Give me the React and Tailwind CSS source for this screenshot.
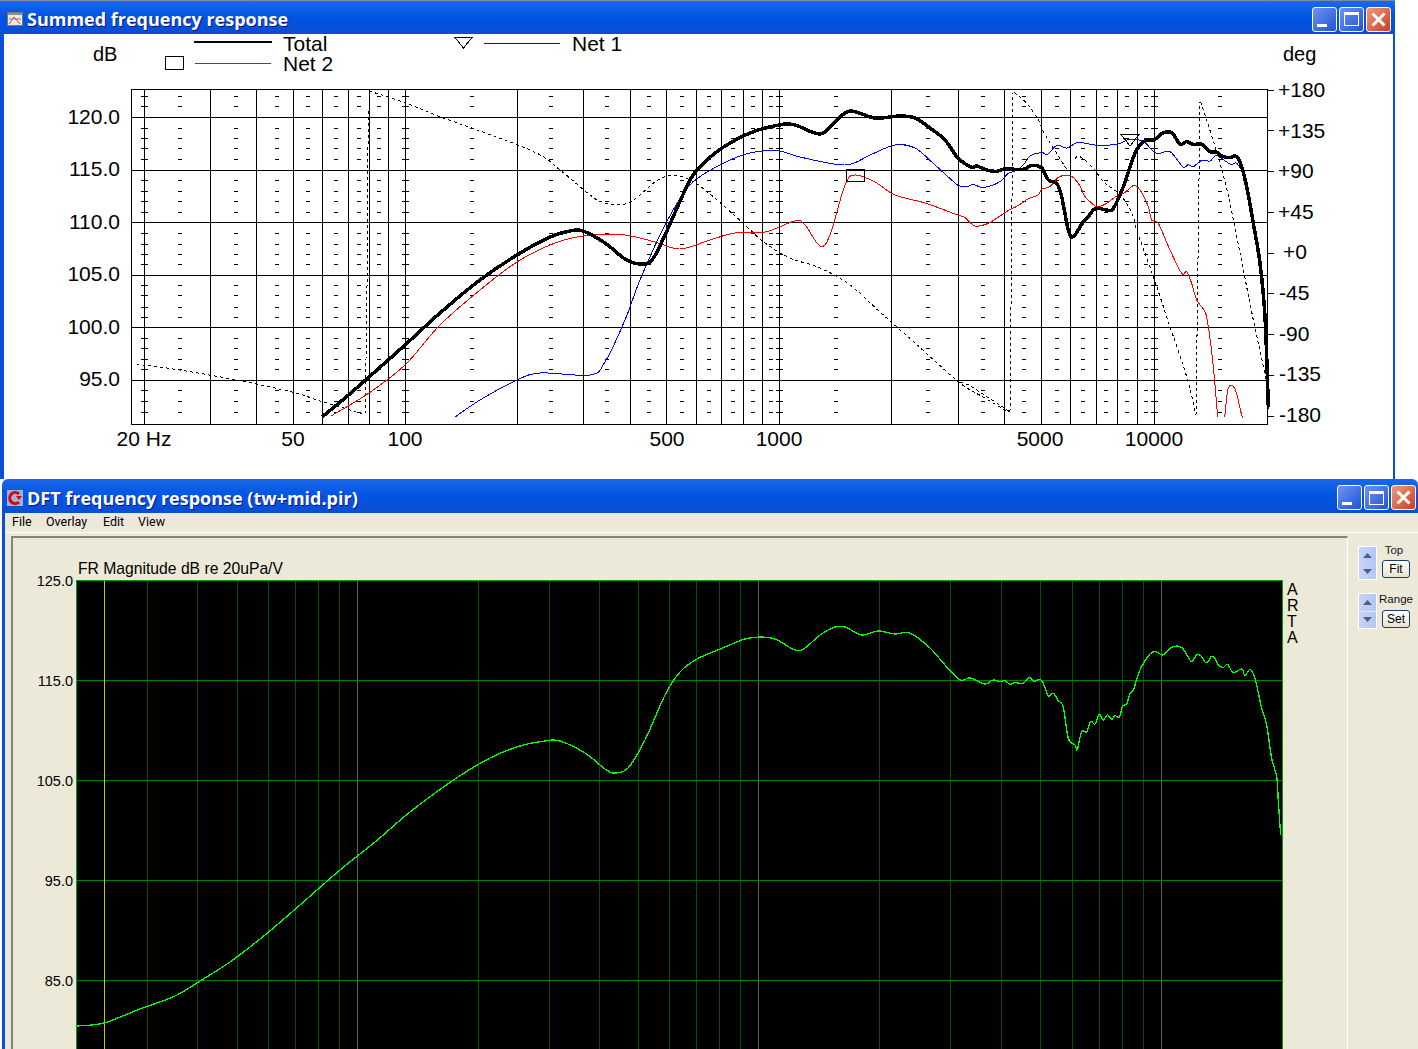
import React from "react";

const fromZoom = (pts, ox, oy) => pts.map(([x, y]) => [ox + x / 3, oy + y / 3]);

// catmull-rom through the read-off points, so the curves don't look polygonal
const smooth = (pts) => {
  let d = "M" + pts[0][0] + " " + pts[0][1];
  for (let i = 0; i < pts.length - 1; i++) {
    const p0 = pts[i - 1] || pts[i];
    const p1 = pts[i];
    const p2 = pts[i + 1];
    const p3 = pts[i + 2] || p2;
    const c1x = p1[0] + (p2[0] - p0[0]) / 6;
    const c1y = p1[1] + (p2[1] - p0[1]) / 6;
    const c2x = p2[0] - (p3[0] - p1[0]) / 6;
    const c2y = p2[1] - (p3[1] - p1[1]) / 6;
    d += " C" + c1x + " " + c1y + " " + c2x + " " + c2y + " " + p2[0] + " " + p2[1];
  }
  return d;
};

const topGridX = [144, 210, 256, 293, 322, 348, 369, 388, 405, 517, 583, 630, 666, 696, 721, 743, 762, 779, 891, 958, 1004, 1041, 1070, 1096, 1117, 1137, 1154];
const topGridY = [117, 170, 222, 275, 327, 380];
const topTickX = [180, 236, 277, 308, 336, 359, 379, 472, 551, 607, 649, 682, 709, 733, 753, 771, 836, 928, 983, 1024, 1057, 1083, 1106, 1127, 1146, 1220];
const topCrossX = [144, 405, 779, 1154];
const topTickY = [96, 106, 128, 138, 148, 159, 180, 191, 201, 212, 233, 244, 254, 264, 285, 295, 307, 317, 338, 348, 359, 369, 390, 401, 412];
const bottomGridX = [147, 197, 237, 268, 295, 318, 339, 478, 549, 599, 638, 669, 696, 719, 740, 879, 950, 1001, 1040, 1072, 1099, 1122, 1143];
const bottomBrightX = [357, 758, 1161];
const bottomGridY = [680, 780, 880, 980];

const total = [
  [322, 417], [345, 398], [369, 377], [405, 345], [440, 313], [480, 280], [517, 255], [550, 237], [570, 231], [583, 231],
  [605, 243], [625, 259], [640, 264], [652, 260], [665, 235], [690, 180], [705, 162], [722, 148], [750, 133], [779, 125], [795, 125],
  [820, 134], [835, 122], [850, 111], [875, 118], [900, 116], [915, 118], [930, 128], [945, 140], [958, 158],
  ...fromZoom([
    [35, 232], [50, 228], [80, 240], [110, 244], [135, 237], [190, 238], [215, 226], [245, 234], [265, 270], [290, 280],
    [305, 320], [325, 420], [340, 440], [370, 395], [385, 380], [400, 360], [415, 355], [440, 360], [460, 355], [490, 290],
    [525, 190], [550, 155], [585, 148], [605, 130], [635, 128], [660, 163], [680, 155], [700, 163], [725, 163], [750, 185],
    [770, 187], [785, 198], [810, 203], [825, 198], [840, 215], [860, 290], [880, 400], [900, 520], [915, 680], [925, 950],
  ], 960, 90),
];
const blue = [
  [455, 417], [480, 400], [515, 381], [540, 373], [590, 375], [605, 362], [625, 320], [640, 280], [665, 225], [690, 185],
  [720, 165], [750, 153], [779, 151], [800, 157], [845, 165], [870, 155], [895, 145], [915, 148], [935, 165], [955, 183],
  ...fromZoom([
    [0, 288], [20, 290], [40, 284], [65, 292], [90, 288], [120, 275], [145, 250], [165, 243], [190, 225], [210, 198],
    [245, 188], [262, 193], [285, 170], [300, 167], [322, 174], [355, 157], [405, 165], [470, 163], [510, 148], [550, 155],
    [590, 190], [630, 185], [668, 230], [685, 224], [700, 230], [725, 211], [750, 213], [770, 197], [810, 222], [830, 220], [850, 250],
  ], 960, 90),
];
const red = [
  [331, 416], [369, 393], [405, 365], [440, 325], [480, 290], [517, 262], [555, 243], [590, 235], [625, 235], [655, 242],
  [680, 249], [710, 240], [735, 233], [765, 232], [795, 221], [805, 225], [820, 246], [830, 235], [845, 185], [855, 175],
  [875, 182], [895, 195], [925, 203], [955, 214],
  ...fromZoom([
    [15, 383], [45, 408], [85, 400], [120, 378], [150, 358], [165, 352], [185, 340], [205, 326], [235, 315], [245, 298],
    [270, 290], [295, 262], [330, 257], [355, 280], [375, 320], [390, 335], [410, 350], [435, 343], [470, 318], [495, 307],
    [520, 287], [540, 300], [565, 350], [575, 390], [595, 400], [630, 480], [665, 550], [680, 545], [695, 580], [710, 630],
    [735, 665], [745, 710], [760, 830], [773, 982],
  ], 960, 90),
];
const redTail = fromZoom([[794, 982], [805, 895], [825, 897], [845, 975], [851, 982]], 960, 90);
const phaseA = fromZoom([[50, 838], [160, 852], [350, 885], [520, 922], [600, 948], [735, 988]], 120, 85);
const phaseB = [
  ...fromZoom([[748, 18], [860, 55], [960, 95]], 120, 85),
  [530, 150], [560, 170], [590, 195], [605, 203], [625, 204], [640, 195], [655, 182], [672, 175], [690, 180], [705, 190],
  [725, 207], [745, 225], [765, 243], [790, 258], [820, 268], [850, 285], [880, 312], [915, 343], [960, 383], [985, 398], [1008, 412],
];
const phaseC = fromZoom([[163, 8], [200, 40], [235, 90], [250, 125], [290, 190], [320, 238]], 960, 90);
const phaseD = fromZoom([
  [345, 205], [360, 200], [400, 235], [430, 275], [470, 305], [500, 340], [520, 380], [530, 420], [580, 560], [630, 710], [680, 860], [708, 975],
], 960, 90);
const phaseE = fromZoom([[722, 35], [740, 90], [780, 220], [810, 340], [850, 540], [880, 690], [920, 880], [925, 960]], 960, 90);
const phaseF = fromZoom([[0, 877], [30, 887], [80, 920], [135, 955], [150, 968]], 960, 90);
const dft = [
  [77, 1026], [104, 1023], [140, 1009], [175, 996], [200, 981], [230, 962], [265, 935], [300, 905], [340, 870], [375, 842],
  [410, 812], [455, 779], [490, 758], [520, 746], [545, 741], [560, 741], [585, 753], [605, 769], [615, 773], [628, 768],
  [645, 740], [665, 695], [680, 672], [697, 659], [725, 647], [745, 639], [760, 637], [775, 639], [795, 650], [805, 648],
  [820, 635], [835, 627], [845, 627], [862, 635], [878, 631], [895, 634], [910, 633], [930, 648], [945, 665], [960, 680],
  [970, 678], [985, 684], [993, 680],
  ...fromZoom([
    [0, 155], [15, 152], [30, 163], [45, 158], [70, 160], [87, 143], [102, 154], [120, 148], [130, 160], [145, 198],
    [160, 190], [175, 212], [190, 232], [205, 325], [225, 345], [232, 358], [245, 305], [260, 306], [272, 275], [285, 282],
    [298, 253], [310, 270], [322, 254], [335, 268], [345, 257], [358, 262], [368, 228], [380, 222], [390, 190], [400, 180],
    [420, 120], [450, 72], [468, 65], [488, 75], [510, 55], [530, 48], [548, 55], [570, 90], [578, 92], [592, 73],
    [605, 80], [615, 96], [625, 95], [633, 80], [645, 85], [655, 105], [670, 112], [683, 103], [700, 128], [725, 117],
    [735, 137], [750, 118], [765, 145], [785, 235], [800, 285], [815, 385], [830, 440], [835, 515], [842, 615],
  ], 1000, 630),
];

const WinButtons = () => (
  <div className="flex gap-[2px]">
    <div className="relative w-[25px] h-[25px] rounded-[3px] border border-white bg-gradient-to-br from-[#6f94ee] to-[#1f51d8]">
      <div className="absolute left-[4px] bottom-[4px] w-[10px] h-[3px] bg-white" />
    </div>
    <div className="flex items-center justify-center w-[25px] h-[25px] rounded-[3px] border border-white bg-gradient-to-br from-[#6f94ee] to-[#1f51d8]">
      <div className="w-[15px] h-[14px] border border-white border-t-[3px]" />
    </div>
    <div className="flex items-center justify-center w-[25px] h-[25px] rounded-[3px] border border-white bg-gradient-to-br from-[#ef9a7c] to-[#c9381a]">
      <svg width="17" height="17" viewBox="0 0 17 17">
        <path d="M2.5 2.5 L14.5 14.5 M14.5 2.5 L2.5 14.5" stroke="#fff" strokeWidth="3" />
      </svg>
    </div>
  </div>
);

const TitleBar = ({ title, icon, extra }) => (
  <div className={"flex items-center shrink-0 h-[34px] pt-[3px] bg-gradient-to-b from-[#1a68ea] via-[#0054e3] to-[#0a4fd0] " + extra}>
    {icon}
    <div className="ml-[4px] flex-1 text-white text-[18px] leading-none font-bold font-['Open_Sans',sans-serif] [text-shadow:1px_1px_#0f1089]">
      {title}
    </div>
    <WinButtons />
  </div>
);

const SummedChart = () => (
  <svg width="1389" height="445" viewBox="4 34 1389 445" className="block overflow-visible" fontFamily="'Liberation Sans', sans-serif" fontSize="21" fill="#000">
    <g shapeRendering="crispEdges" stroke="#000">
      <rect x="131.5" y="89.5" width="1136" height="335" fill="none" />
      {topGridX.map((x) => <line key={x} x1={x + 0.5} x2={x + 0.5} y1="89" y2="424" />)}
      {topGridY.map((y) => <line key={y} x1="131" x2="1268" y1={y + 0.5} y2={y + 0.5} />)}
      {topTickX.map((x) => topTickY.map((y) => <line key={x + "-" + y} x1={x - 2} x2={x + 2} y1={y + 0.5} y2={y + 0.5} />))}
      {topCrossX.map((x) => topTickY.map((y) => <line key={x + "-" + y} x1={x - 3} x2={x + 4} y1={y + 0.5} y2={y + 0.5} />))}
      {[90, 130, 171, 212, 253, 293, 334, 375, 416].map((y) => <line key={y} x1="1268" x2="1274" y1={y + 0.5} y2={y + 0.5} />)}
    </g>
    <g fill="none" stroke="#000" strokeDasharray="3 3" shapeRendering="crispEdges">
      <path d={smooth(phaseA)} />
      <path d="M365 414 L366 360 L367.500 250 L368 145 L369.500 91" />
      <path d={smooth(phaseB)} />
      <path d={smooth(phaseF)} />
      <path d="M1010 412 L1013 93" />
      <path d={smooth(phaseC)} />
      <path d={smooth(phaseD)} />
      <path d="M1196 415 L1200 102" />
      <path d={smooth(phaseE)} />
    </g>
    <g fill="none" shapeRendering="crispEdges">
      <path d={smooth(red)} stroke="#ff0000" />
      <path d={smooth(redTail)} stroke="#ff0000" />
      <path d={smooth(blue)} stroke="#0000ff" />
      <path d={smooth(total)} stroke="#000" strokeWidth="3.5" />
      <path d="M1121 134.5 H1139 L1130 146 Z" stroke="#000" />
      <rect x="846.5" y="169.5" width="18" height="12" stroke="#000" />
      <path d="M455 37.5 H472 L463.5 48 Z" stroke="#000" />
      <rect x="165.5" y="56.5" width="18" height="13" stroke="#000" />
    </g>
    <g shapeRendering="crispEdges">
      <line x1="194" x2="272" y1="42" y2="42" stroke="#000" strokeWidth="2" />
      <line x1="195" x2="271" y1="63.5" y2="63.5" stroke="#ff0000" />
      <line x1="484" x2="560" y1="43.5" y2="43.5" stroke="#0000ff" />
    </g>
    <text x="283" y="51">Total</text>
    <text x="283" y="71">Net 2</text>
    <text x="572" y="51">Net 1</text>
    <text x="93" y="61" fontSize="20">dB</text>
    <text x="1283" y="61" fontSize="20">deg</text>
    {["120.0", "115.0", "110.0", "105.0", "100.0", "95.0"].map((t, i) => (
      <text key={t} x="120" y={124 + i * 52.4} textAnchor="end">{t}</text>
    ))}
    {[["+180", 1278], ["+135", 1278], ["+90", 1278], ["+45", 1278], ["+0", 1283], ["-45", 1279], ["-90", 1279], ["-135", 1279], ["-180", 1279]].map(([t, x], i) => (
      <text key={t} x={x} y={97 + i * 40.6}>{t}</text>
    ))}
    {[["20 Hz", 144], ["50", 293], ["100", 405], ["500", 667], ["1000", 779], ["5000", 1040], ["10000", 1154]].map(([t, x]) => (
      <text key={t} x={x} y="446" textAnchor="middle">{t}</text>
    ))}
  </svg>
);

const DftChart = () => (
  <svg width="1336" height="511" viewBox="13 538 1336 511" className="block" fontFamily="'Liberation Sans', sans-serif" fontSize="14.5" fill="#000">
    <rect x="77" y="580" width="1205" height="480" fill="#000" />
    <g shapeRendering="crispEdges">
      {bottomGridX.map((x) => <line key={x} x1={x + 0.5} x2={x + 0.5} y1="581" y2="1049" stroke="#005400" />)}
      {bottomBrightX.map((x) => <line key={x} x1={x + 0.5} x2={x + 0.5} y1="581" y2="1049" stroke="#4f6e4f" />)}
      {bottomGridY.map((y) => <line key={y} x1="77" x2="1282" y1={y + 0.5} y2={y + 0.5} stroke="#008000" />)}
      <line x1="104.5" x2="104.5" y1="581" y2="1049" stroke="#c8c800" />
      <rect x="76.5" y="580.5" width="1206" height="480" fill="none" stroke="#00a000" />
    </g>
    <path d={smooth(dft)} fill="none" stroke="#00ff00" strokeWidth="1.3" shapeRendering="crispEdges" />
    <text x="78" y="574" fontSize="15.7">FR Magnitude dB re 20uPa/V</text>
    {["125.0", "115.0", "105.0", "95.0", "85.0"].map((t, i) => (
      <text key={t} x="73" y={586 + i * 100} textAnchor="end">{t}</text>
    ))}
    {["A", "R", "T", "A"].map((t, i) => (
      <text key={i} x="1287" y={595 + i * 16} fontSize="16">{t}</text>
    ))}
  </svg>
);

const Spinner = ({ extra }) => (
  <div className={"flex flex-col w-[19px] border border-white bg-gradient-to-r from-[#c6d4f8] to-[#b4c6f4] " + extra}>
    <div className="flex flex-1 items-center justify-center">
      <svg width="9" height="5" viewBox="0 0 9 5"><path d="M4.5 0 L9 5 H0 Z" fill="#4d6185" /></svg>
    </div>
    <div className="flex flex-1 items-center justify-center">
      <svg width="9" height="5" viewBox="0 0 9 5"><path d="M0 0 H9 L4.5 5 Z" fill="#4d6185" /></svg>
    </div>
  </div>
);

const SideControl = ({ label, btn, labelClass, spinnerClass }) => (
  <div className="flex gap-[5px] items-start">
    <Spinner extra={spinnerClass} />
    <div className="flex flex-col items-center w-[28px]">
      <div className={"text-[11.500px] leading-[14px] h-[14px] whitespace-nowrap " + labelClass}>{label}</div>
      <div className="flex items-center justify-center w-[28px] h-[18px] rounded-[3px] border border-[#1c3d66] bg-gradient-to-b from-white to-[#e6e3d4] text-[12px] leading-none">
        {btn}
      </div>
    </div>
  </div>
);

const App = () => (
  <div className="flex flex-col w-[1418px] h-[1049px] overflow-hidden bg-white font-['Liberation_Sans',sans-serif]">
    <div className="flex flex-col w-[1395px] h-[479px] shrink-0">
      <TitleBar
        title="Summed frequency response"
        extra="pl-[7px] pr-[4px] border-t border-[#7a8ba8]"
        icon={
          <svg width="16" height="16" viewBox="0 0 16 16" className="shrink-0">
            <rect x="0.5" y="1.5" width="15" height="13" fill="#ece9d8" stroke="#777" />
            <rect x="1" y="2" width="14" height="2" fill="#8a8fa8" />
            <path d="M2 13 L7 6 L13 13" fill="none" stroke="#d04040" />
            <path d="M2 8 H14" stroke="#6a7fb0" />
          </svg>
        }
      />
      <div className="flex-1 bg-white border-l-4 border-r-2 border-[#0a4fd8]">
        <SummedChart />
      </div>
    </div>
    <div className="flex flex-col flex-1 min-h-0 ml-[2px]">
      <TitleBar
        title="DFT frequency response (tw+mid.pir)"
        extra="pl-[5px] pr-[2px] rounded-t-[6px]"
        icon={
          <svg width="16" height="16" viewBox="0 0 16 16" className="shrink-0">
            <rect width="16" height="16" fill="#9ab4d8" />
            <path d="M12 4 A5.5 5.5 0 1 0 12 12" fill="none" stroke="#e00000" strokeWidth="3" />
            <path d="M9 6 H15 L12 10 Z" fill="#e00000" />
          </svg>
        }
      />
      <div className="flex flex-col flex-1 min-h-0 bg-[#ece9d8] border-l-[3px] border-[#0a4fd8]">
        <div className="flex items-center shrink-0 h-[20px] pl-[7px] text-[12.500px] border-b border-white font-['Roboto',sans-serif]">
          <span className="w-[34px]">File</span>
          <span className="w-[57px]">Overlay</span>
          <span className="w-[35px]">Edit</span>
          <span>View</span>
        </div>
        <div className="flex flex-1 min-h-0 pt-[3px] pl-[6px]">
          <div className="w-[1337px] border-t-2 border-l-2 border-r border-t-[#85827a] border-l-[#85827a] border-r-white overflow-hidden">
            <DftChart />
          </div>
          <div className="flex flex-col gap-[13px] pt-[10px] pl-[10px]">
            <SideControl label="Top" btn="Fit" labelClass="text-[#222] -mt-[3px] mb-[3px] pr-[4px]" spinnerClass="h-[34px]" />
            <SideControl label="Range" btn="Set" labelClass="text-[#111] -mt-[1px] mb-[4px]" spinnerClass="h-[36px] divide-y divide-[#dfe7fb]" />
          </div>
        </div>
      </div>
    </div>
  </div>
);

export default App;
